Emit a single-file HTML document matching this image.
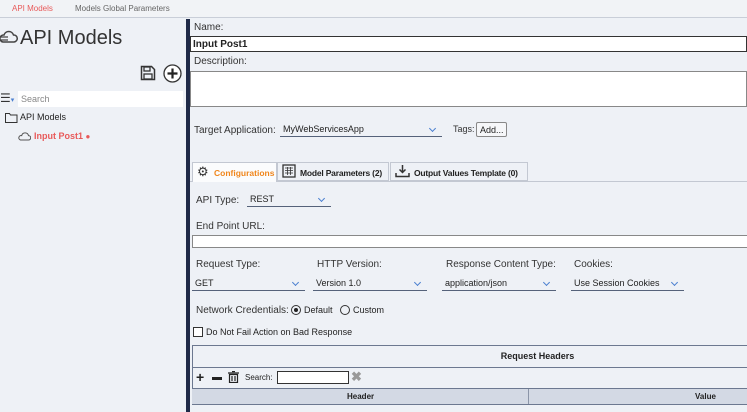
<!DOCTYPE html>
<html><head><style>
*{box-sizing:border-box;margin:0;padding:0}
body{width:747px;height:412px;overflow:hidden;background:#eef1f6;font-family:"Liberation Sans",sans-serif;font-size:10px;color:#222;position:relative}
.a{position:absolute;white-space:nowrap}
.combo{position:absolute;border-bottom:1px solid #55627a;height:13px;font-size:9px;padding-left:3px}
.combo:after{content:"";position:absolute;right:7px;top:2px;width:4px;height:4px;border-right:1px solid #4a7fd0;border-bottom:1px solid #4a7fd0;transform:rotate(45deg)}
.lbl{font-size:10px;color:#333}
</style></head><body>
<div class="a" style="left:0;top:0;width:747px;height:18px;background:#f1f3f6;border-bottom:1px solid #c9ced8"></div>
<div class="a" style="left:12px;top:4px;font-size:8px;color:#e85a5a">API Models</div>
<div class="a" style="left:75px;top:4px;font-size:8px;color:#666">Models Global Parameters</div>

<svg class="a" style="left:0;top:29px" width="18" height="16" viewBox="0 0 18 16"><path d="M3 13 H14 A3.5 3.5 0 0 0 13.5 6 A5 5 0 0 0 4 6 A3.5 3.5 0 0 0 3 13Z" fill="none" stroke="#444" stroke-width="1.5"/><path d="M1 8h7M1 11h7" stroke="#444" stroke-width="1.3"/></svg>
<div class="a" style="left:20px;top:27px;font-size:20px;color:#333">API Models</div>
<svg class="a" style="left:140px;top:65px" width="16" height="16" viewBox="0 0 16 16"><path d="M1.5 1.5h10l3 3v10h-13z" fill="none" stroke="#333" stroke-width="1.5"/><rect x="4" y="2" width="6" height="4" fill="none" stroke="#333" stroke-width="1.3"/><rect x="4" y="9" width="8" height="5" fill="none" stroke="#333" stroke-width="1.3"/></svg>
<svg class="a" style="left:163px;top:64px" width="19" height="19" viewBox="0 0 19 19"><circle cx="9.5" cy="9.5" r="8.5" fill="#fff" stroke="#333" stroke-width="1.3"/><path d="M9.5 4.5v10M4.5 9.5h10" stroke="#222" stroke-width="2.2"/></svg>
<div class="a" style="left:0;top:93px;font-size:12px;line-height:10px;color:#333">☰<span style="font-size:7px;color:#4a7fd0">▾</span></div>
<div class="a" style="left:18px;top:91px;width:165px;height:16px;background:#fff;font-size:9px;color:#888;padding:3px 3px">Search</div>
<svg class="a" style="left:5px;top:112px" width="13" height="11" viewBox="0 0 13 11"><path d="M0.5 1.5h4l1 1.5h6.5v7.5h-11.5z" fill="none" stroke="#333"/></svg>
<div class="a" style="left:20px;top:112px;font-size:9px;color:#222">API Models</div>
<svg class="a" style="left:18px;top:132px" width="13" height="9" viewBox="0 0 13 9"><path d="M2.5 8h8a2.2 2.2 0 0 0 0-4.4a3.5 3.5 0 0 0-6.8 0a2.2 2.2 0 0 0-1.2 4.4z" fill="none" stroke="#555"/></svg>
<div class="a" style="left:34px;top:131px;font-size:9px;font-weight:bold;color:#e85a5a">Input Post1 <span style="font-size:8px">●</span></div>

<div class="a" style="left:186px;top:19px;width:4px;height:393px;background:#1f2a48"></div>

<div class="a lbl" style="left:194px;top:22px">Name:</div>
<div class="a" style="left:190px;top:36px;width:557px;height:16px;background:#fff;border:1px solid #333;font-weight:bold;font-size:10px;padding:2px 2px">Input Post1</div>
<div class="a lbl" style="left:194px;top:56px">Description:</div>
<div class="a" style="left:190px;top:71px;width:557px;height:36px;background:#fff;border:1px solid #888"></div>

<div class="a lbl" style="left:194px;top:125px">Target Application:</div>
<div class="combo" style="left:280px;top:124px;width:162px">MyWebServicesApp</div>
<div class="a" style="left:453px;top:124px;font-size:9px;color:#333">Tags:</div>
<div class="a" style="left:476px;top:122px;width:31px;height:15px;border:1px solid #888;border-radius:2px;background:#f6f7f9;font-size:9px;padding:2px 3px">Add...</div>

<div class="a" style="left:190px;top:181px;width:557px;height:1px;background:#c3c8d2"></div>
<div class="a" style="left:192px;top:162px;width:85px;height:20px;background:#fbfcfd;border:1px solid #c3c8d2;border-bottom:none;font-size:8.5px;font-weight:bold;color:#f0861c;padding:5px 0 0 21px">Configurations</div>
<div class="a" style="left:197px;top:165px;font-size:13px;line-height:13px;color:#333">⚙</div>
<div class="a" style="left:277px;top:162px;width:112px;height:19px;background:#eef1f6;border:1px solid #c3c8d2;font-size:8.5px;font-weight:bold;padding:5px 0 0 22px;letter-spacing:-0.2px">Model Parameters (2)</div>
<svg class="a" style="left:282px;top:164px" width="14" height="14" viewBox="0 0 14 14"><rect x="1" y="1" width="12" height="12" fill="none" stroke="#333" stroke-width="1.3"/><path d="M3 4h8M3 6.5h8M3 9h8M5.5 3v8M8.5 3v8" stroke="#333" stroke-width=".8"/></svg>
<div class="a" style="left:390px;top:162px;width:138px;height:19px;background:#eef1f6;border:1px solid #c3c8d2;font-size:8.5px;font-weight:bold;padding:5px 0 0 23px;letter-spacing:-0.2px">Output Values Template (0)</div>
<svg class="a" style="left:395px;top:164px" width="15" height="14" viewBox="0 0 15 14"><path d="M7.5 1v7M4.5 5.5l3 3 3-3M1 9v3.5h13V9" fill="none" stroke="#333" stroke-width="1.5"/></svg>

<div class="a lbl" style="left:196px;top:195px">API Type:</div>
<div class="combo" style="left:247px;top:194px;width:84px">REST</div>
<div class="a lbl" style="left:196px;top:221px">End Point URL:</div>
<div class="a" style="left:192px;top:235px;width:555px;height:13px;background:#fff;border:1px solid #888;border-right:none"></div>

<div class="a lbl" style="left:196px;top:259px">Request Type:</div>
<div class="a lbl" style="left:317px;top:259px">HTTP Version:</div>
<div class="a lbl" style="left:446px;top:259px">Response Content Type:</div>
<div class="a lbl" style="left:574px;top:259px">Cookies:</div>
<div class="combo" style="left:192px;top:278px;width:113px">GET</div>
<div class="combo" style="left:313px;top:278px;width:114px">Version 1.0</div>
<div class="combo" style="left:442px;top:278px;width:114px">application/json</div>
<div class="combo" style="left:571px;top:278px;width:113px">Use Session Cookies</div>

<div class="a lbl" style="left:196px;top:305px">Network Credentials:</div>
<div class="a" style="left:291px;top:305px;width:10px;height:10px;border:1px solid #333;border-radius:50%"><div style="margin:2px;width:4px;height:4px;border-radius:50%;background:#222"></div></div>
<div class="a" style="left:304px;top:305px;font-size:9px">Default</div>
<div class="a" style="left:340px;top:305px;width:10px;height:10px;border:1px solid #333;border-radius:50%"></div>
<div class="a" style="left:353px;top:305px;font-size:9px">Custom</div>
<div class="a" style="left:193px;top:327px;width:10px;height:10px;border:1px solid #333;background:#fff"></div>
<div class="a" style="left:206px;top:327px;font-size:9px">Do Not Fail Action on Bad Response</div>

<div class="a" style="left:192px;top:345px;width:555px;height:60px;border:1px solid #6c7890;border-right:none;background:#eef1f6"></div>
<div class="a" style="left:192px;top:346px;width:555px;height:22px;border-bottom:1px solid #6c7890;font-size:9px;font-weight:bold;text-align:center;padding:5px 0 0 136px">Request Headers</div>
<div class="a" style="left:196px;top:370px;font-size:14px;font-weight:bold;line-height:14px">+</div>
<div class="a" style="left:212px;top:377px;width:10px;height:3px;background:#222"></div>
<svg class="a" style="left:228px;top:371px" width="11" height="12" viewBox="0 0 11 12"><path d="M0 2h11M4 0.5h3M1.5 3.5h8v8h-8zM4 5v5M7 5v5" fill="none" stroke="#222" stroke-width="1.2"/></svg>
<div class="a" style="left:245px;top:373px;font-size:8px">Search:</div>
<div class="a" style="left:277px;top:371px;width:72px;height:13px;background:#fff;border:1px solid #333"></div>
<div class="a" style="left:351px;top:369px;font-size:13px;font-weight:bold;color:#999">✖</div>
<div class="a" style="left:192px;top:388px;width:555px;height:17px;background:#d3d9e4;border-top:1px solid #6c7890;border-bottom:1px solid #6c7890"></div>
<div class="a" style="left:528px;top:389px;width:1px;height:15px;background:#8b95a8"></div>
<div class="a" style="left:347px;top:392px;font-size:8px;font-weight:bold">Header</div>
<div class="a" style="left:695px;top:392px;font-size:8px;font-weight:bold">Value</div>
</body></html>
